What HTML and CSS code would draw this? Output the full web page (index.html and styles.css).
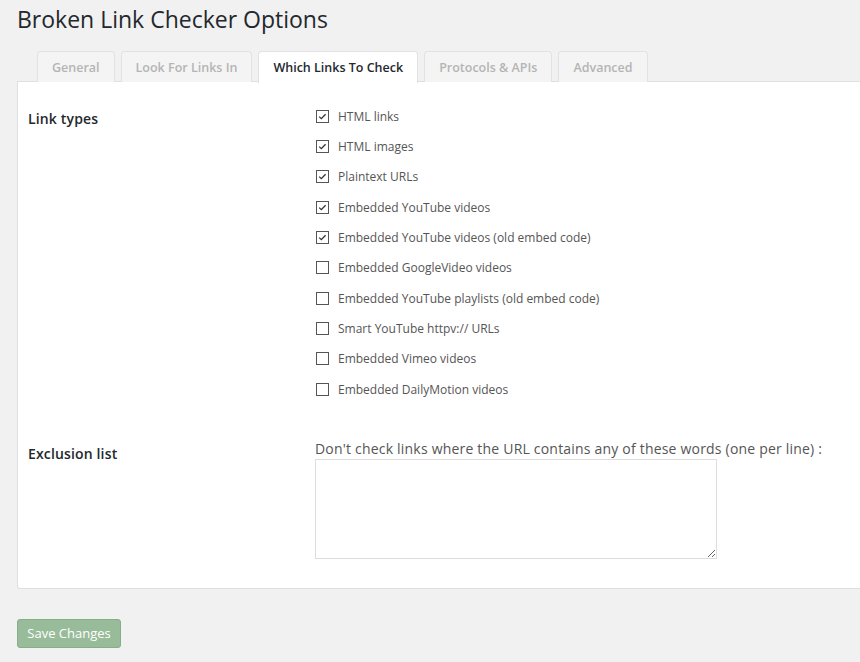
FILE: index.html
```html
<!DOCTYPE html>
<html>
<head>
<meta charset="utf-8">
<link rel="stylesheet" href="styles.css">
</head>
<body>
<div class="wrap">
  <h1 class="title">Broken Link Checker Options</h1>
  <div class="tabs">
    <span class="tab">General</span>
    <span class="tab">Look For Links In</span>
    <span class="tab tab-active">Which Links To Check</span>
    <span class="tab">Protocols &amp; APIs</span>
    <span class="tab">Advanced</span>
  </div>
  <div class="panel">
    <div class="section">
      <div class="label label-types">Link types</div>
      <div class="field">
        <div class="row"><span class="cb checked"><svg viewBox="0 0 13 13" width="13" height="13"><polyline points="3.2,6.6 5.3,8.6 9.6,4.2" fill="none" stroke="#333" stroke-width="1.3"/></svg></span><span class="opt">HTML links</span></div>
        <div class="row"><span class="cb checked"><svg viewBox="0 0 13 13" width="13" height="13"><polyline points="3.2,6.6 5.3,8.6 9.6,4.2" fill="none" stroke="#333" stroke-width="1.3"/></svg></span><span class="opt">HTML images</span></div>
        <div class="row"><span class="cb checked"><svg viewBox="0 0 13 13" width="13" height="13"><polyline points="3.2,6.6 5.3,8.6 9.6,4.2" fill="none" stroke="#333" stroke-width="1.3"/></svg></span><span class="opt">Plaintext URLs</span></div>
        <div class="row"><span class="cb checked"><svg viewBox="0 0 13 13" width="13" height="13"><polyline points="3.2,6.6 5.3,8.6 9.6,4.2" fill="none" stroke="#333" stroke-width="1.3"/></svg></span><span class="opt">Embedded YouTube videos</span></div>
        <div class="row"><span class="cb checked"><svg viewBox="0 0 13 13" width="13" height="13"><polyline points="3.2,6.6 5.3,8.6 9.6,4.2" fill="none" stroke="#333" stroke-width="1.3"/></svg></span><span class="opt">Embedded YouTube videos (old embed code)</span></div>
        <div class="row"><span class="cb"></span><span class="opt">Embedded GoogleVideo videos</span></div>
        <div class="row"><span class="cb"></span><span class="opt">Embedded YouTube playlists (old embed code)</span></div>
        <div class="row"><span class="cb"></span><span class="opt">Smart YouTube httpv:// URLs</span></div>
        <div class="row"><span class="cb"></span><span class="opt">Embedded Vimeo videos</span></div>
        <div class="row"><span class="cb"></span><span class="opt">Embedded DailyMotion videos</span></div>
      </div>
    </div>
    <div class="section section-excl">
      <div class="label label-excl">Exclusion list</div>
      <div class="field">
        <div class="desc">Don't check links where the URL contains any of these words (one per line) :</div>
        <textarea class="excl"></textarea>
      </div>
    </div>
  </div>
  <div class="actions">
    <button class="save">Save Changes</button>
  </div>
</div>
</body>
</html>
```

FILE: styles.css
```css
html, body {
  margin: 0;
  padding: 0;
  background: #f1f1f1;
  overflow: hidden;
}
body {
  font-family: "Open Sans", "Noto Sans", sans-serif;
  color: #444;
}
.wrap {
  padding-left: 17px;
}
.title {
  margin: 0;
  padding-top: 5px;
  font-size: 23px;
  font-weight: 400;
  line-height: 29px;
  color: #23282d;
}
.tabs {
  display: flex;
  margin-top: 17px;
  padding-left: 20px;
  height: 30px;
  position: relative;
  z-index: 1;
}
.tab {
  display: block;
  box-sizing: border-box;
  height: 31px;
  padding: 0 14px;
  margin-right: 6px;
  border: 1px solid #e2e2e2;
  border-bottom: none;
  border-radius: 4px 4px 0 0;
  background: #f4f4f4;
  color: #b4b4b4;
  font-size: 12.5px;
  font-weight: 600;
  line-height: 31px;
}
.tab-active {
  background: #fff;
  color: #23282d;
  height: 32px;
  border-color: #e2e2e2;
}
.panel {
  background: #fff;
  border: 1px solid #e0e0e0;
  border-right: none;
  border-radius: 0 0 0 3px;
  margin-right: -20px;
  padding: 19px 10px 29px 10px;
}
.section {
  display: flex;
}
.section-excl {
  margin-top: 34px;
}
.label {
  width: 287px;
  flex: none;
  font-size: 14px;
  font-weight: 600;
  color: #23282d;
  line-height: 20px;
  letter-spacing: 0.15px;
}
.label-types {
  padding-top: 8px;
}
.label-excl {
  padding-top: 6px;
}
.field {
  display: flex;
  flex-direction: column;
}
.row {
  display: flex;
  align-items: center;
  height: 30.33px;
}
.cb {
  box-sizing: border-box;
  width: 13px;
  height: 13px;
  margin-left: 1px;
  border: 1px solid #555;
  background: #fff;
  display: flex;
  align-items: center;
  justify-content: center;
}
.cb svg {
  display: block;
  flex: none;
}
.opt {
  margin-left: 9px;
  font-size: 12px;
  color: #555;
}
.desc {
  font-size: 14px;
  line-height: 20px;
  padding-top: 1px;
  letter-spacing: 0.2px;
  color: #555;
}
.excl {
  display: block;
  box-sizing: border-box;
  width: 402px;
  height: 100px;
  margin: 0;
  border: 1px solid #ddd;
  background: #fff;
  font-family: inherit;
}
.actions {
  padding-top: 30px;
}
.save {
  box-sizing: border-box;
  width: 104px;
  height: 29px;
  padding: 0;
  background: #98bc9a;
  border: 1px solid #87ad89;
  border-radius: 3px;
  color: #fff;
  font-family: "Open Sans", "Noto Sans", sans-serif;
  font-size: 13px;
  line-height: 27px;
}
```
